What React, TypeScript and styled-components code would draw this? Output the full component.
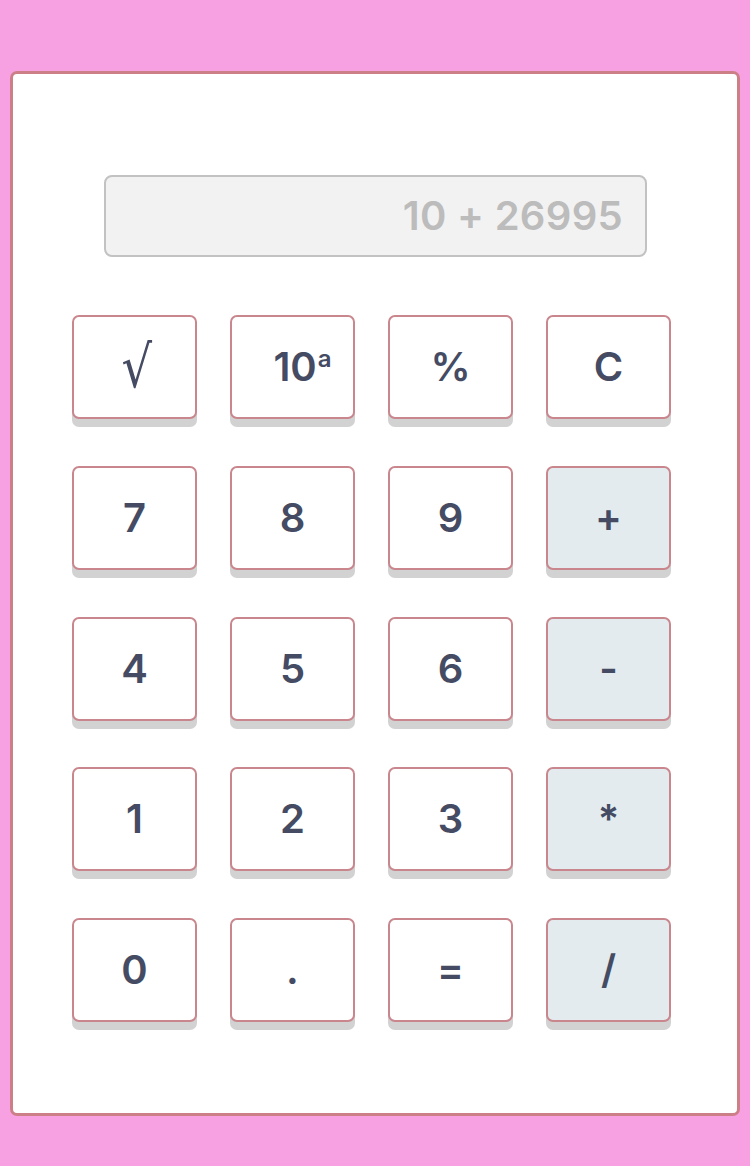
import React from "react";
import styled, { createGlobalStyle } from "styled-components";

const Global = createGlobalStyle`
  html, body { margin: 0; padding: 0; background: #f8a1e2; }
  body { font-family: Inter, "Noto Sans", sans-serif; }
`;

const Page = styled.div`
  width: 750px;
  height: 1166px;
  box-sizing: border-box;
  padding: 71px 10px 50px 10px;
  background: #f8a1e2;
`;

const Card = styled.div`
  box-sizing: border-box;
  height: 100%;
  background: #ffffff;
  border: 3px solid #cd7f88;
  border-radius: 7px;
  padding: 101px 66px 0 59px;
  display: flex;
  flex-direction: column;
  align-items: stretch;
`;

const Display = styled.div`
  box-sizing: border-box;
  margin: 0 24px 0 32px;
  height: 82px;
  background: #f2f2f2;
  border: 2px solid #c2c2c2;
  border-radius: 8px;
  display: flex;
  align-items: center;
  justify-content: flex-end;
  padding: 0 22px 2px 0;
  font-size: 40px;
  font-weight: 600;
  letter-spacing: 0.3px;
  color: #bcbcbc;
`;

const Grid = styled.div`
  margin-top: 58px;
  display: grid;
  grid-template-columns: repeat(4, 125px);
  grid-auto-rows: 104px;
  column-gap: 33px;
  row-gap: 46.75px;
`;

const Key = styled.button<{ $op?: boolean; $shift?: number }>`
  box-sizing: border-box;
  border: 2px solid #c9868d;
  border-radius: 7px;
  background: ${(p) => (p.$op ? "#e3ebee" : "#ffffff")};
  box-shadow: 0 8px 0 #d2d2d2;
  color: #444b63;
  font-family: Inter, "Noto Sans", sans-serif;
  font-size: 40px;
  font-weight: 600;
  display: flex;
  align-items: center;
  justify-content: center;
  padding: 0 0 0 ${(p) => p.$shift ?? 0}px;
  cursor: pointer;
`;

const Label = styled.span`
  display: inline-block;
  line-height: 1;
`;

const Root = styled.span`
  font-family: "DejaVu Sans", sans-serif;
  font-weight: 400;
  font-size: 40px;
  display: inline-block;
  transform: scale(1.2, 1.45);
  margin-left: 5px;
`;

const Sup = styled.sup`
  font-size: 24px;
  font-weight: 600;
  vertical-align: 14px;
  line-height: 0;
  margin-left: 1px;
`;

type KeyDef = { label: React.ReactNode; op?: boolean; shift?: number };

const keys: KeyDef[] = [
  { label: <Root>√</Root> },
  { label: <>10<Sup>a</Sup></>, shift: 20 },
  { label: "%" },
  { label: "C" },
  { label: "7" },
  { label: "8" },
  { label: "9" },
  { label: "+", op: true },
  { label: "4" },
  { label: "5" },
  { label: "6" },
  { label: "-", op: true },
  { label: "1" },
  { label: "2" },
  { label: "3" },
  { label: "*", op: true },
  { label: "0" },
  { label: "." },
  { label: "=" },
  { label: "/", op: true },
];

export default function App() {
  return (
    <>
      <Global />
      <Page>
        <Card>
          <Display>10 + 26995</Display>
          <Grid>
            {keys.map((k, i) => (
              <Key key={i} $op={k.op} $shift={k.shift}>
                <Label>{k.label}</Label>
              </Key>
            ))}
          </Grid>
        </Card>
      </Page>
    </>
  );
}
